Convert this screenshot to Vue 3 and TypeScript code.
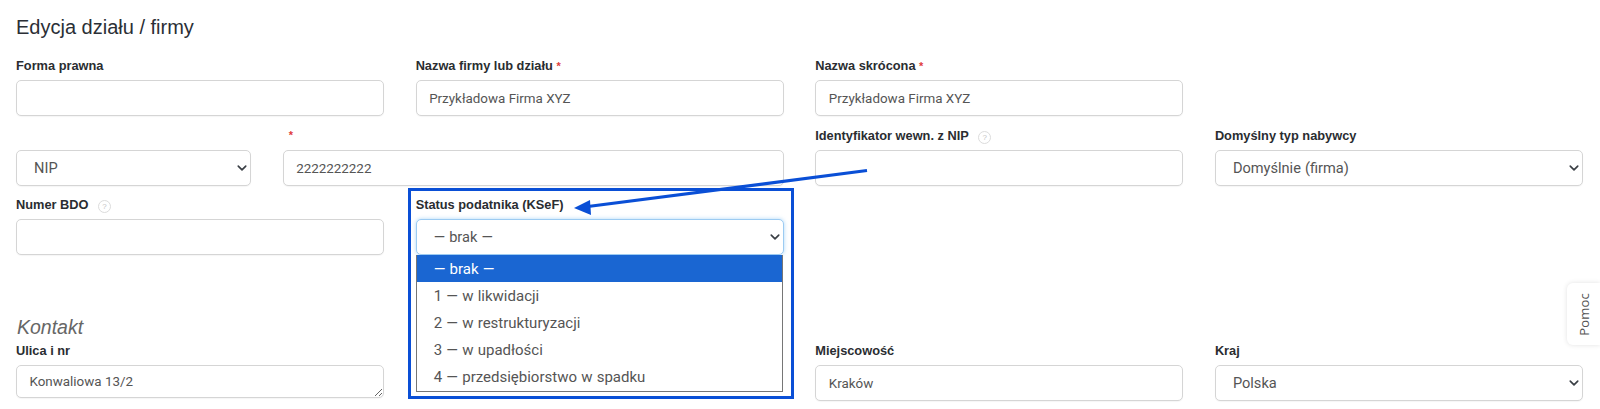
<script setup lang="ts">
const statuses: string[] = [
  '— brak —',
  '1 — w likwidacji',
  '2 — w restrukturyzacji',
  '3 — w upadłości',
  '4 — przedsiębiorstwo w spadku',
]
</script>

<template>
  <div class="page">
    <h1 class="title">Edycja działu / firmy</h1>

    <div class="row row-first">
      <div class="field">
        <label class="lbl">Forma prawna</label>
        <input class="ctl" type="text" />
      </div>
      <div class="field">
        <label class="lbl">Nazwa firmy lub działu <span class="req">*</span></label>
        <input class="ctl" type="text" value="Przykładowa Firma XYZ" />
      </div>
      <div class="field">
        <label class="lbl">Nazwa skrócona <span class="req">*</span></label>
        <input class="ctl" type="text" value="Przykładowa Firma XYZ" />
      </div>
    </div>

    <div class="row row-second">
      <div class="nested">
        <div class="field">
          <label class="lbl">&nbsp;</label>
          <div class="sel-wrap">
            <select class="ctl sel"><option>NIP</option></select>
            <svg class="chev" viewBox="0 0 16 16"><path d="M2 5l6 6 6-6" /></svg>
          </div>
        </div>
        <div class="field">
          <label class="lbl"><span class="req req-high">*</span></label>
          <input class="ctl" type="text" value="2222222222" />
        </div>
      </div>
      <div class="field">
        <label class="lbl">Identyfikator wewn. z NIP <span class="hint">?</span></label>
        <input class="ctl" type="text" />
      </div>
      <div class="field">
        <label class="lbl">Domyślny typ nabywcy</label>
        <div class="sel-wrap">
          <select class="ctl sel"><option>Domyślnie (firma)</option></select>
          <svg class="chev" viewBox="0 0 16 16"><path d="M2 5l6 6 6-6" /></svg>
        </div>
      </div>
    </div>

    <div class="row">
      <div class="field">
        <label class="lbl">Numer BDO <span class="hint">?</span></label>
        <input class="ctl" type="text" />
      </div>
      <div class="field">
        <label class="lbl">Status podatnika (KSeF)</label>
        <div class="sel-wrap">
          <select class="ctl sel focus"><option>— brak —</option></select>
          <svg class="chev" viewBox="0 0 16 16"><path d="M2 5l6 6 6-6" /></svg>
          <ul class="dropdown">
            <li v-for="(s, i) in statuses" :key="s" class="opt" :class="{ active: i === 0 }">{{ s }}</li>
          </ul>
        </div>
      </div>
    </div>

    <h2 class="section">Kontakt</h2>

    <div class="row">
      <div class="field">
        <label class="lbl">Ulica i nr</label>
        <textarea class="ctl area" rows="1">Konwaliowa 13/2</textarea>
      </div>
      <div class="field"></div>
      <div class="field">
        <label class="lbl">Miejscowość</label>
        <input class="ctl" type="text" value="Kraków" />
      </div>
      <div class="field">
        <label class="lbl">Kraj</label>
        <div class="sel-wrap">
          <select class="ctl sel"><option>Polska</option></select>
          <svg class="chev" viewBox="0 0 16 16"><path d="M2 5l6 6 6-6" /></svg>
        </div>
      </div>
    </div>

    <div class="highlight"></div>
    <svg class="arrow" width="1600" height="409" viewBox="0 0 1600 409">
      <line x1="867" y1="170.500" x2="588" y2="206.500" />
      <polygon points="574,208 590,200 591,215" />
    </svg>
    <div class="help"><span>Pomoc</span></div>
  </div>
</template>

<style>
html, body {
  margin: 0;
  background: #fff;
  overflow: hidden;
}
</style>

<style scoped>
.page {
  position: relative;
  height: 409px;
  overflow: hidden;
  box-sizing: border-box;
  padding: 15px 17px 0 16px;
  font-family: "Liberation Sans", Arial, sans-serif;
  color: #212529;
  background: #fff;
}
.title {
  margin: 0;
  font-size: 20px;
  line-height: 24px;
  font-weight: 400;
  color: #2b2f36;
}
.row {
  display: grid;
  grid-template-columns: repeat(4, 1fr);
  column-gap: 31.5px;
  height: 70px;
}
.row-first {
  margin-top: 17px;
}
.row-second {
  height: 69px;
}
.nested {
  grid-column: span 2;
  display: grid;
  grid-template-columns: 234.67px 1fr;
  column-gap: 32px;
}
.field {
  display: flex;
  flex-direction: column;
  min-width: 0;
}
.lbl {
  display: block;
  height: 20px;
  margin-bottom: 4px;
  font-size: 12.8px;
  line-height: 20px;
  font-weight: 700;
  color: #2a2d31;
  white-space: nowrap;
}
.req {
  font-size: 11px;
  color: #e03c3c;
}
.req-high {
  position: relative;
  top: -1px;
  left: 6px;
}
.hint {
  display: inline-block;
  width: 11px;
  height: 11px;
  margin-left: 6px;
  border: 1px solid #dcdcdc;
  border-radius: 50%;
  font-size: 8px;
  line-height: 11px;
  font-weight: 400;
  text-align: center;
  color: #c4c4c4;
  vertical-align: 0;
}
.ctl {
  display: block;
  width: 100%;
  height: 36px;
  box-sizing: border-box;
  padding: 0 12.5px;
  border: 1px solid #d5d5d5;
  border-radius: 5px;
  background: #fff;
  font-family: Roboto, "Liberation Sans", sans-serif;
  font-size: 13.4px;
  color: #555;
  outline: none;
  box-shadow: 0 1px 1px rgba(0, 0, 0, 0.04);
}
.sel-wrap {
  position: relative;
}
.sel {
  appearance: none;
  -webkit-appearance: none;
  padding-left: 17px;
  font-size: 14.6px;
  word-spacing: 0.5px;
}
.focus {
  border-color: #9ccbf2;
  box-shadow: 0 0 4px rgba(120, 190, 245, 0.6);
}
.chev {
  position: absolute;
  right: 4px;
  top: 13px;
  width: 10px;
  height: 10px;
  pointer-events: none;
}
.chev path {
  fill: none;
  stroke: #3a3f45;
  stroke-width: 2.6;
  stroke-linecap: round;
  stroke-linejoin: round;
}
.dropdown {
  position: absolute;
  left: 0;
  top: 36px;
  width: calc(100% - 1px);
  box-sizing: border-box;
  margin: 0;
  padding: 0 0 1px;
  list-style: none;
  background: #fff;
  border: 1px solid #767676;
  border-top: 0;
  z-index: 2;
}
.opt {
  height: 27px;
  padding-left: 17px;
  font-family: Roboto, "Liberation Sans", sans-serif;
  font-size: 15px;
  line-height: 29px;
  word-spacing: 0.5px;
  color: #555;
}
.opt.active {
  background: #1a66d2;
  color: #fff;
}
.section {
  margin: 50px 0 2px;
  padding-left: 1px;
  font-size: 19.5px;
  line-height: 24px;
  font-weight: 400;
  font-style: italic;
  color: #666;
}
.area {
  height: 33px;
  padding-top: 8px;
  resize: vertical;
  line-height: 16px;
}
.highlight {
  position: absolute;
  left: 408px;
  top: 188px;
  width: 386px;
  height: 211px;
  box-sizing: border-box;
  border: 3px solid #0a4fd6;
  z-index: 3;
  pointer-events: none;
}
.arrow {
  position: absolute;
  left: 0;
  top: 0;
  z-index: 4;
  pointer-events: none;
}
.arrow line {
  stroke: #0a4fd6;
  stroke-width: 3.2;
}
.arrow polygon {
  fill: #0a4fd6;
}
.help {
  position: absolute;
  right: 0;
  top: 283px;
  width: 33px;
  height: 62px;
  display: flex;
  align-items: center;
  justify-content: center;
  background: #fff;
  border-radius: 6px 0 0 6px;
  box-shadow: 0 0 5px rgba(0, 0, 0, 0.12);
  z-index: 5;
}
.help span {
  writing-mode: vertical-rl;
  transform: rotate(180deg);
  font-size: 13px;
  letter-spacing: 0.2px;
  color: #555;
  font-family: "Open Sans", "Liberation Sans", sans-serif;
}
</style>
